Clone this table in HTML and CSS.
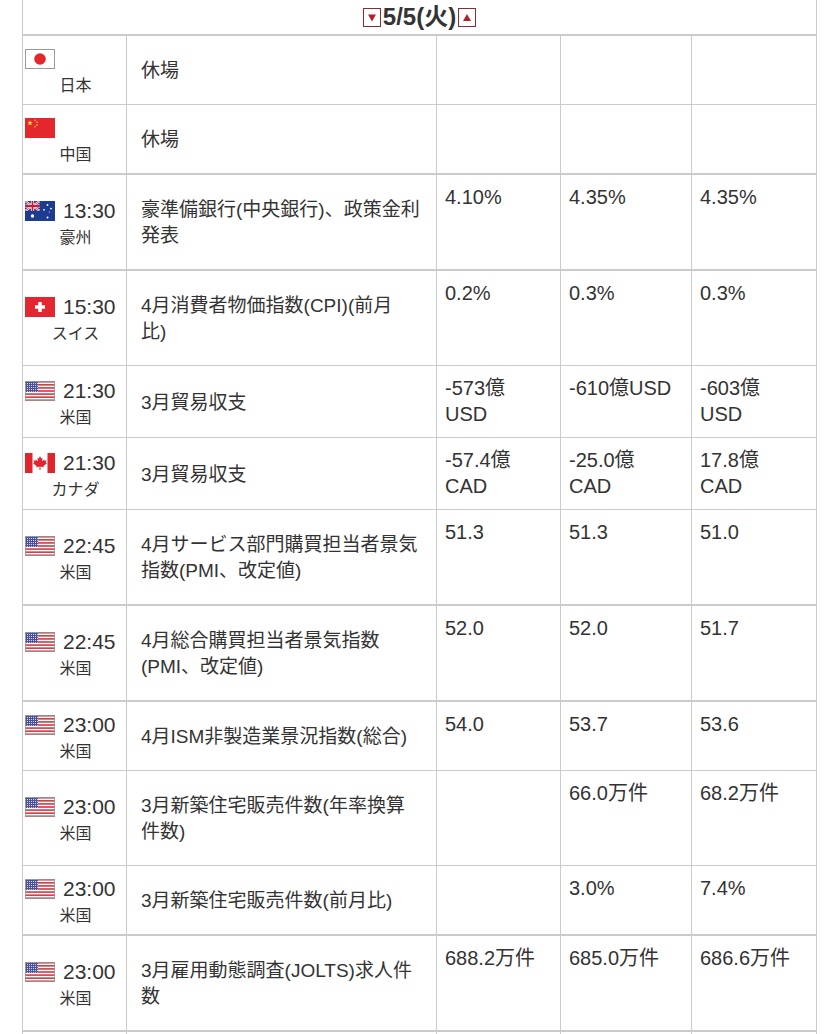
FILE: index.html
```html
<!DOCTYPE html>
<html lang="ja">
<head>
<meta charset="utf-8">
<title>経済指標カレンダー</title>
<link rel="stylesheet" href="styles.css">
</head>
<body>
<svg class="defs" width="0" height="0" aria-hidden="true">
  <defs>
    <pattern id="dots" width="2" height="2" patternUnits="userSpaceOnUse">
      <rect width="1" height="1" fill="#fff" opacity="0.75"/>
    </pattern>
    <clipPath id="ukclip"><rect width="15" height="10"/></clipPath>
  </defs>
  <symbol id="f-jp" viewBox="0 0 30 20">
    <rect x="0.5" y="0.5" width="29" height="19" fill="#fff" stroke="#9a9a9a"/>
    <circle cx="15" cy="10" r="5.8" fill="#e4262d"/>
  </symbol>
  <symbol id="f-cn" viewBox="0 0 30 20">
    <rect width="30" height="20" fill="#e4272c"/>
    <polygon fill="#ffd83a" points="5,2 5.674,4.073 7.853,4.073 6.09,5.354 6.763,7.427 5,6.146 3.237,7.427 3.91,5.354 2.147,4.073 4.326,4.073"/>
    <circle cx="10" cy="2.2" r="0.75" fill="#ffd83a"/>
    <circle cx="12" cy="4.2" r="0.75" fill="#ffd83a"/>
    <circle cx="12" cy="6.9" r="0.75" fill="#ffd83a"/>
    <circle cx="10" cy="8.7" r="0.75" fill="#ffd83a"/>
  </symbol>
  <symbol id="f-au" viewBox="0 0 30 20">
    <rect width="30" height="20" fill="#1b3c91"/>
    <g clip-path="url(#ukclip)">
      <path d="M0,0 L15,10 M15,0 L0,10" stroke="#fff" stroke-width="2.2"/>
      <path d="M0,0 L15,10 M15,0 L0,10" stroke="#d3182f" stroke-width="0.8"/>
      <path d="M7.5,0 V10 M0,5 H15" stroke="#fff" stroke-width="3.2"/>
      <path d="M7.5,0 V10 M0,5 H15" stroke="#d3182f" stroke-width="1.8"/>
    </g>
    <circle cx="7.5" cy="15" r="1.7" fill="#fff"/>
    <circle cx="22.5" cy="16.5" r="1" fill="#fff"/>
    <circle cx="19" cy="8.8" r="0.9" fill="#fff"/>
    <circle cx="22.5" cy="4" r="0.9" fill="#fff"/>
    <circle cx="26" cy="7.6" r="0.9" fill="#fff"/>
    <circle cx="24.3" cy="11" r="0.55" fill="#fff"/>
  </symbol>
  <symbol id="f-ch" viewBox="0 0 30 20">
    <rect width="30" height="20" fill="#e3262f"/>
    <rect x="13.25" y="5" width="3.5" height="10" fill="#fff"/>
    <rect x="10" y="8.25" width="10" height="3.5" fill="#fff"/>
  </symbol>
  <symbol id="f-us" viewBox="0 0 30 20">
    <rect width="30" height="20" fill="#fff"/>
    <g fill="#c9353f">
      <rect y="0" width="30" height="1.54"/>
      <rect y="3.08" width="30" height="1.54"/>
      <rect y="6.15" width="30" height="1.54"/>
      <rect y="9.23" width="30" height="1.54"/>
      <rect y="12.31" width="30" height="1.54"/>
      <rect y="15.38" width="30" height="1.54"/>
      <rect y="18.46" width="30" height="1.54"/>
    </g>
    <rect width="13" height="10.77" fill="#4b5196"/>
    <rect width="13" height="10.77" fill="url(#dots)"/>
    <rect x="0.5" y="0.5" width="29" height="19" fill="none" stroke="#9a9a9a" stroke-opacity="0.8"/>
  </symbol>
  <symbol id="f-ca" viewBox="0 0 30 20">
    <rect width="30" height="20" fill="#fff"/>
    <rect width="7.5" height="20" fill="#e1252d"/>
    <rect x="22.5" width="7.5" height="20" fill="#e1252d"/>
    <polygon fill="#e1252d" points="15,3 16.2,5.5 17.5,4.8 17,8.5 19,6.5 19.5,7.8 21.5,7.3 20.8,9.6 22,10.2 18.5,13 19,14.2 15.5,13.6 15.5,17 14.5,17 14.5,13.6 11,14.2 11.5,13 8,10.2 9.2,9.6 8.5,7.3 10.5,7.8 11,6.5 13,8.5 12.5,4.8 13.8,5.5"/>
  </symbol>
</svg>

<table class="cal">
  <colgroup>
    <col class="c-time">
    <col class="c-event">
    <col class="c-v1">
    <col class="c-v2">
    <col class="c-v3">
  </colgroup>
  <tbody>
    <tr class="head">
      <td colspan="5">
        <div class="hd">
          <svg class="arr" width="18" height="19" viewBox="0 0 18 19"><rect x="0.5" y="0.5" width="17" height="18" fill="#fff" stroke="#8e2a30"/><path d="M5,6.5 H13 L9,13.5 Z" fill="#b3202c"/></svg>
          <span class="date">5/5(火)</span>
          <svg class="arr" width="18" height="19" viewBox="0 0 18 19"><rect x="0.5" y="0.5" width="17" height="18" fill="#fff" stroke="#8e2a30"/><path d="M5,13 H13 L9,6 Z" fill="#b3202c"/></svg>
        </div>
      </td>
    </tr>

    <tr>
      <td class="tm"><div class="tm-top"><svg class="flag"><use href="#f-jp"/></svg></div><div class="cty">日本</div></td>
      <td class="ev">休場</td>
      <td class="val"></td><td class="val"></td><td class="val"></td>
    </tr>
    <tr class="thick">
      <td class="tm"><div class="tm-top"><svg class="flag"><use href="#f-cn"/></svg></div><div class="cty">中国</div></td>
      <td class="ev">休場</td>
      <td class="val"></td><td class="val"></td><td class="val"></td>
    </tr>
    <tr class="thick">
      <td class="tm"><div class="tm-top"><svg class="flag"><use href="#f-au"/></svg><span class="time">13:30</span></div><div class="cty">豪州</div></td>
      <td class="ev">豪準備銀行(中央銀行)、政策金利<br>発表</td>
      <td class="val">4.10%</td><td class="val">4.35%</td><td class="val">4.35%</td>
    </tr>
    <tr>
      <td class="tm"><div class="tm-top"><svg class="flag"><use href="#f-ch"/></svg><span class="time">15:30</span></div><div class="cty">スイス</div></td>
      <td class="ev">4月消費者物価指数(CPI)(前月<br>比)</td>
      <td class="val">0.2%</td><td class="val">0.3%</td><td class="val">0.3%</td>
    </tr>
    <tr>
      <td class="tm"><div class="tm-top"><svg class="flag"><use href="#f-us"/></svg><span class="time">21:30</span></div><div class="cty">米国</div></td>
      <td class="ev">3月貿易収支</td>
      <td class="val">-573億<br>USD</td><td class="val">-610億USD</td><td class="val">-603億<br>USD</td>
    </tr>
    <tr>
      <td class="tm"><div class="tm-top"><svg class="flag"><use href="#f-ca"/></svg><span class="time">21:30</span></div><div class="cty">カナダ</div></td>
      <td class="ev">3月貿易収支</td>
      <td class="val">-57.4億<br>CAD</td><td class="val">-25.0億<br>CAD</td><td class="val">17.8億<br>CAD</td>
    </tr>
    <tr class="thick">
      <td class="tm"><div class="tm-top"><svg class="flag"><use href="#f-us"/></svg><span class="time">22:45</span></div><div class="cty">米国</div></td>
      <td class="ev">4月サービス部門購買担当者景気<br>指数(PMI、改定値)</td>
      <td class="val">51.3</td><td class="val">51.3</td><td class="val">51.0</td>
    </tr>
    <tr class="thick">
      <td class="tm"><div class="tm-top"><svg class="flag"><use href="#f-us"/></svg><span class="time">22:45</span></div><div class="cty">米国</div></td>
      <td class="ev">4月総合購買担当者景気指数<br>(PMI、改定値)</td>
      <td class="val">52.0</td><td class="val">52.0</td><td class="val">51.7</td>
    </tr>
    <tr>
      <td class="tm"><div class="tm-top"><svg class="flag"><use href="#f-us"/></svg><span class="time">23:00</span></div><div class="cty">米国</div></td>
      <td class="ev">4月ISM非製造業景況指数(総合)</td>
      <td class="val">54.0</td><td class="val">53.7</td><td class="val">53.6</td>
    </tr>
    <tr>
      <td class="tm"><div class="tm-top"><svg class="flag"><use href="#f-us"/></svg><span class="time">23:00</span></div><div class="cty">米国</div></td>
      <td class="ev">3月新築住宅販売件数(年率換算<br>件数)</td>
      <td class="val"></td><td class="val">66.0万件</td><td class="val">68.2万件</td>
    </tr>
    <tr class="thick">
      <td class="tm"><div class="tm-top"><svg class="flag"><use href="#f-us"/></svg><span class="time">23:00</span></div><div class="cty">米国</div></td>
      <td class="ev">3月新築住宅販売件数(前月比)</td>
      <td class="val"></td><td class="val">3.0%</td><td class="val">7.4%</td>
    </tr>
    <tr class="thick">
      <td class="tm"><div class="tm-top"><svg class="flag"><use href="#f-us"/></svg><span class="time">23:00</span></div><div class="cty">米国</div></td>
      <td class="ev">3月雇用動態調査(JOLTS)求人件<br>数</td>
      <td class="val">688.2万件</td><td class="val">685.0万件</td><td class="val">686.6万件</td>
    </tr>
    <tr class="next">
      <td></td><td></td><td></td><td></td><td></td>
    </tr>
  </tbody>
</table>
</body>
</html>
```

FILE: styles.css
```css
html, body {
  margin: 0;
  padding: 0;
  background: #fff;
}

body {
  font-family: "Liberation Sans", "Noto Sans CJK JP", sans-serif;
  color: #333;
}

.defs {
  position: absolute;
  width: 0;
  height: 0;
  overflow: hidden;
}

.cal {
  margin-left: 22px;
  width: 795px;
  table-layout: fixed;
  border-collapse: separate;
  border-spacing: 0;
}

.c-time { width: 105px; }
.c-event { width: 310px; }
.c-v1 { width: 124px; }
.c-v2 { width: 131px; }
.c-v3 { width: 125px; }

.cal td {
  border-right: 1px solid #cbcbcb;
  border-bottom: 1px solid #cbcbcb;
  box-sizing: border-box;
}

.cal td:first-child {
  border-left: 1px solid #cbcbcb;
}

.cal tr.thick td {
  border-bottom-width: 2px;
}

.head td {
  height: 36px;
  padding: 0;
  border-bottom-width: 2px;
  vertical-align: middle;
}

.hd {
  display: flex;
  justify-content: center;
  align-items: center;
  gap: 2px;
}

.arr {
  display: block;
}

.date {
  font-size: 24px;
  font-weight: bold;
  line-height: 26px;
  color: #333;
}

.tm {
  padding: 10px 2px 5px 2px;
  vertical-align: middle;
}

.tm-top {
  display: flex;
  align-items: center;
  gap: 8px;
  height: 26px;
}

.flag {
  width: 30px;
  height: 20px;
  display: block;
  flex: none;
}

.time {
  font-size: 21px;
  line-height: 26px;
  white-space: nowrap;
}

.cty {
  font-size: 16px;
  line-height: 27px;
  text-align: center;
  padding-left: 2px;
}

.ev {
  padding: 22px 6px 20px 14px;
  font-size: 19px;
  line-height: 26px;
  vertical-align: middle;
}

.val {
  padding: 9px 4px 10px 8px;
  font-size: 20px;
  line-height: 26px;
  vertical-align: top;
}

.next td {
  height: 68px;
}
```
